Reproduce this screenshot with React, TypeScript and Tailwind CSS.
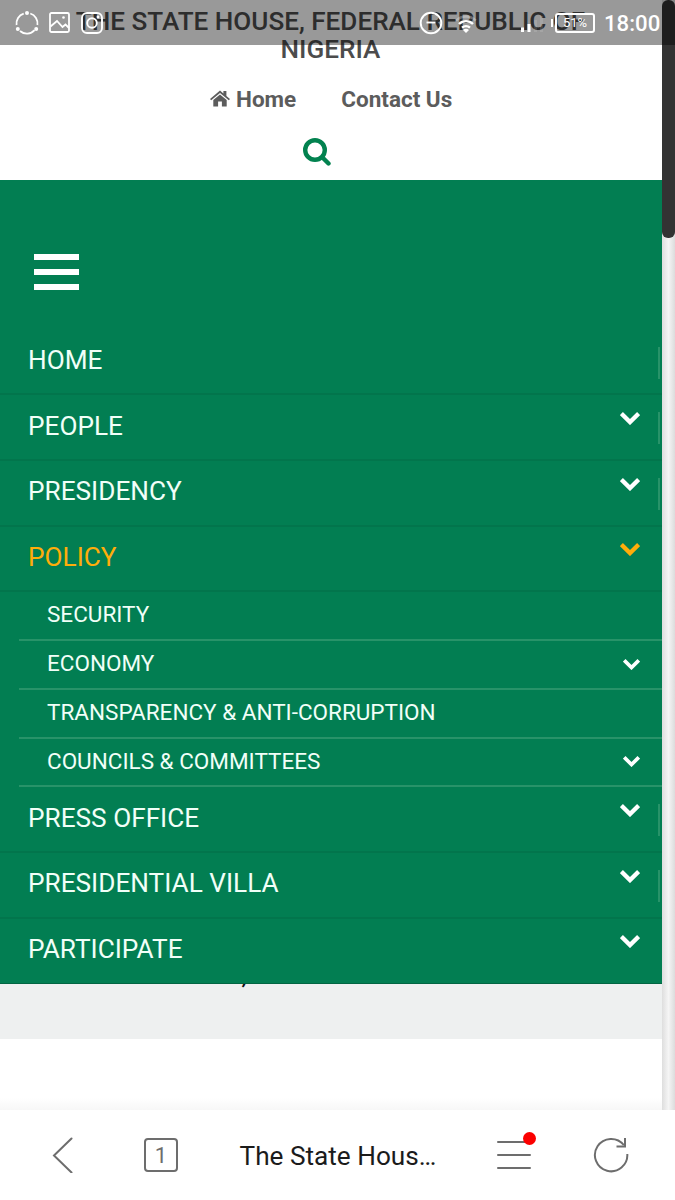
import type { ReactNode } from "react";

type MenuItem = {
  label: string;
  hasChildren?: boolean;
  divider?: boolean;
  active?: boolean;
  children?: { label: string; hasChildren?: boolean }[];
};

const MENU: MenuItem[] = [
  { label: "HOME", divider: true },
  { label: "PEOPLE", hasChildren: true, divider: true },
  { label: "PRESIDENCY", hasChildren: true, divider: true },
  {
    label: "POLICY",
    hasChildren: true,
    active: true,
    children: [
      { label: "SECURITY" },
      { label: "ECONOMY", hasChildren: true },
      { label: "TRANSPARENCY & ANTI-CORRUPTION" },
      { label: "COUNCILS & COMMITTEES", hasChildren: true },
    ],
  },
  { label: "PRESS OFFICE", hasChildren: true, divider: true },
  { label: "PRESIDENTIAL VILLA", hasChildren: true, divider: true },
  { label: "PARTICIPATE", hasChildren: true },
];

function Chevron({ className }: { className: string }) {
  return (
    <svg viewBox="0 0 20 13" className={`shrink-0 ${className}`} fill="none" stroke="currentColor" strokeWidth="4.3">
      <path d="M1.4 1.6 10 10.1 18.6 1.6" />
    </svg>
  );
}

function StatusBar() {
  return (
    <div className="absolute inset-x-0 top-0 z-10 flex h-[45px] items-center bg-black/40 text-white">
      <svg viewBox="0 0 24 24" className="ml-[15px] h-6 w-6" fill="none" stroke="currentColor" strokeWidth="1.8">
        <path d="M15.3 2.5A10.3 10.3 0 0 1 22.4 14M19.6 19.2A10.3 10.3 0 0 1 5 20M1.6 14A10.3 10.3 0 0 1 8.7 2.6" />
        <g fill="currentColor" stroke="none">
          <circle cx="12" cy="2.1" r="2" />
          <circle cx="2.8" cy="18" r="2" />
          <circle cx="21.2" cy="18" r="2" />
        </g>
      </svg>
      <svg viewBox="0 0 21 21" className="ml-[10px] h-[21px] w-[21px]" fill="none" stroke="currentColor" strokeWidth="1.8">
        <rect x="1" y="1" width="19" height="19" rx="1.5" />
        <path d="M1.5 14.5 8 9l5.5 6 3-2.5 3.5 3.5" />
        <circle cx="14.5" cy="5.5" r="1.3" fill="currentColor" stroke="none" />
      </svg>
      <svg viewBox="0 0 22 22" className="ml-[11px] h-[22px] w-[22px]" fill="none" stroke="currentColor" strokeWidth="1.9">
        <rect x="1" y="1" width="20" height="20" rx="5" />
        <circle cx="11" cy="11" r="4.8" />
        <circle cx="17" cy="5" r="1.4" fill="currentColor" stroke="none" />
      </svg>

      <svg viewBox="0 0 24 24" className="ml-[316px] h-6 w-6" fill="none" stroke="currentColor" strokeWidth="1.9">
        <circle cx="12" cy="12" r="10.3" />
        <path d="M7.5 11.5h9" />
      </svg>
      <svg viewBox="0 0 22 20" className="ml-3 mt-[2px] h-5 w-[22px]" fill="none" stroke="currentColor" strokeWidth="2.4">
        <path d="M1.2 6.5a14 14 0 0 1 19.6 0" opacity=".3" />
        <path d="M4 10a10 10 0 0 1 14 0M7 13.7a6 6 0 0 1 8 0" />
        <path d="m11 19-3-3a4.5 4.5 0 0 1 6 0Z" fill="currentColor" stroke="none" />
      </svg>
      <svg viewBox="0 0 30 20" className="ml-[43px] h-5 w-[30px]" fill="currentColor">
        <path d="M1 14.5h3V19H1zM7.5 11h3v8h-3z" />
        <path d="M14 7h3v12h-3zM20 3h3v16h-3z" opacity=".12" />
      </svg>
      <div className="ml-[1px] h-2 w-[2px] bg-white" />
      <div className="ml-[2px] flex h-5 w-10 items-center justify-center rounded-[3px] border-2 border-white text-[13px] leading-none">
        51%
      </div>
      <span className="ml-[9px] mt-[2px] text-[22.2px] leading-none font-medium">18:00</span>
    </div>
  );
}

function MenuRow({ item }: { item: MenuItem }) {
  return (
    <li className="group">
      <div
        className={`flex h-[65.6px] items-start border-b-2 border-[#02754c] pl-7 group-last:border-b-0 ${item.active ? "text-[#ffad0a]" : "text-[#f1fff8]"}`}
      >
        <span className="mt-[15.3px] text-[26.2px] leading-[31px]">{item.label}</span>
        {item.hasChildren && (
          <Chevron
            className={`mt-[16.5px] ml-auto h-[13px] w-5 ${item.divider ? "mr-[18px]" : "mr-[22px]"} ${item.active ? "" : "text-white"}`}
          />
        )}
        {item.divider && (
          <div className={`mt-[17px] mr-[2px] h-8 w-[2px] bg-[#289369] ${item.hasChildren ? "" : "ml-auto"}`} />
        )}
      </div>
      {item.children && (
        <ul className="pl-[19px]">
          {item.children.map((child) => (
            <li
              key={child.label}
              className="flex h-[48.8px] items-start border-b-2 border-[#289369] pl-7 text-[#f1fff8]"
            >
              <span className="mt-[8px] text-[22.5px] leading-7">{child.label}</span>
              {child.hasChildren && <Chevron className="mt-[17.5px] mr-[22px] ml-auto h-[11px] w-[17px] text-white" />}
            </li>
          ))}
        </ul>
      )}
    </li>
  );
}

function ToolbarIcon({ className, children }: { className?: string; children: ReactNode }) {
  return (
    <svg viewBox="0 0 36 36" className={`h-9 w-9 shrink-0 ${className ?? ""}`} fill="none" stroke="#6d6d6d" strokeWidth="2" strokeLinecap="round">
      {children}
    </svg>
  );
}

function BrowserBar() {
  return (
    <footer className="flex h-[90px] items-center bg-white">
      <ToolbarIcon className="ml-[45px]">
        <path d="M26.5 1.5 9 18.5l17.5 17" />
      </ToolbarIcon>
      <div className="ml-[63px] flex h-[34px] w-[34px] items-center justify-center rounded-[4px] border-2 border-[#6d6d6d] pt-[2px] text-[22px] leading-none text-[#6d6d6d]">
        1
      </div>
      <span className="mt-[3px] ml-[61.5px] w-[200px] text-[26.2px] whitespace-nowrap text-[#1b1b1b]">The State Hous…</span>
      <div className="relative ml-[56.5px]">
        <ToolbarIcon>
          <path d="M2 5h32M2 18h32M2 31h32" />
        </ToolbarIcon>
        <div className="absolute -top-[5px] left-[27px] h-[13px] w-[13px] rounded-full bg-[#fb0000]" />
      </div>
      <ToolbarIcon className="ml-[61px]">
        <path d="M34.3 17A16.2 16.2 0 1 1 30.8 8M23.5 9.5H32V1" strokeLinecap="butt" />
      </ToolbarIcon>
    </footer>
  );
}

export default function App() {
  return (
    <div className="relative flex h-[1200px] w-[675px] flex-col overflow-hidden bg-white font-['Roboto',sans-serif]">
      <StatusBar />
      <div className="flex h-[1110px]">
        <main className="flex w-[662px] flex-col">
          <header className="h-[180px] text-center">
            <h1 className="pt-[7px] pr-px text-[26.1px] leading-7 font-medium text-[#4c4c4c]">
              THE STATE HOUSE, FEDERAL REPUBLIC OF
              <br />
              NIGERIA
            </h1>
            <nav className="mt-[22px] flex items-center pl-[209.5px] text-[22.5px] leading-7 font-bold text-[#5c5c5c]">
              <svg viewBox="0 0 20 17" className="mr-[6.5px] mb-[2px] h-[17px] w-5" fill="currentColor">
                <path d="M0 9 10 .5l3.4 2.9V1h3v5L20 9l-1.2 1.3L10 3 1.2 10.3z" />
                <path d="m10 4.5 6.7 5.6V16.5h-4.8v-5H8.1v5H3.3v-6.4z" />
              </svg>
              <span>Home</span>
              <span className="ml-[45px]">Contact Us</span>
            </nav>
            <svg viewBox="0 0 28 28" className="mt-[24.5px] ml-[303px] h-7 w-7" fill="none" stroke="#02824f" strokeLinecap="round">
              <circle cx="12" cy="12" r="9.8" strokeWidth="4.4" />
              <path d="m19.5 19.5 6 6" strokeWidth="4.4" />
            </svg>
          </header>
          <nav className="h-[804px] border-b border-[#026542] bg-[#027e52]">
            <div className="flex h-[149.9px] flex-col gap-[9px] pt-[74px] pl-[34px]">
              <div className="h-[6px] w-[45px] bg-white" />
              <div className="h-[6px] w-[45px] bg-white" />
              <div className="h-[6px] w-[45px] bg-white" />
            </div>
            <ul>
              {MENU.map((item) => (
                <MenuRow key={item.label} item={item} />
              ))}
            </ul>
          </nav>
          <section className="h-[55px] overflow-hidden bg-[#eef0f0]">
            <p className="-mt-[23px] pl-[241.5px] text-[26px] leading-7 text-[#111111]">,</p>
          </section>
          <div className="mt-auto h-3 bg-linear-to-b from-white to-[#f7f7f7]" />
        </main>
        <aside className="w-[13px] bg-linear-to-r from-[#dedede] via-[#f5f5f5] to-[#dcdcdc]">
          <div className="h-[238px] rounded-[6px] bg-[#333333]" />
        </aside>
      </div>
      <BrowserBar />
    </div>
  );
}
